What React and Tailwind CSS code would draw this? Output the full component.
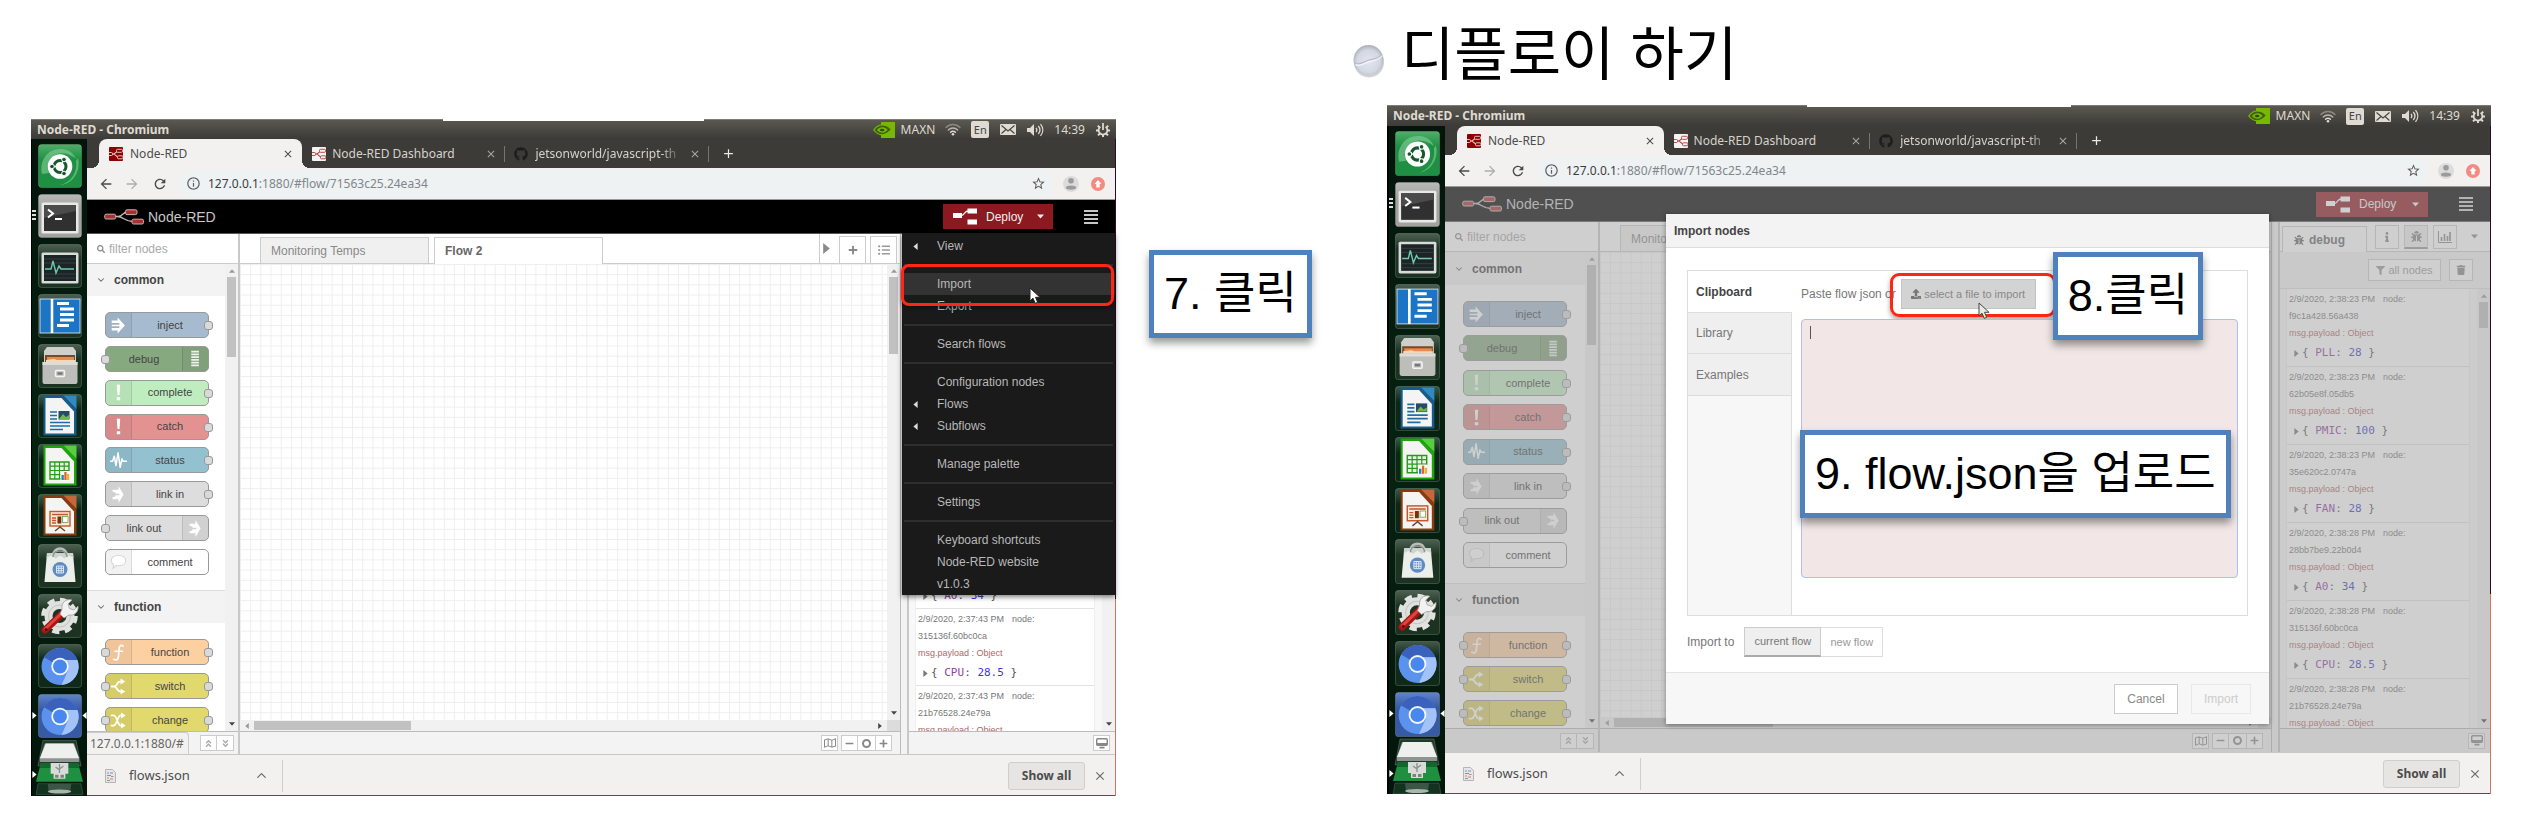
import React from "react";
import { FaBug, FaInfo, FaTrash, FaFilter, FaListUl, FaSearch, FaUpload, FaPlus, FaMinus, FaGithub, FaRegMap, FaAngleDoubleUp, FaAngleDoubleDown, FaChartBar } from "react-icons/fa";
import { MdArrowBack, MdArrowForward, MdRefresh, MdInfoOutline, MdStarBorder, MdClose, MdAdd } from "react-icons/md";
import { ChevronDown, ChevronUp } from "lucide-react";

const UI = "font-['Noto_Sans',sans-serif]";
const SANS = "font-['Liberation_Sans','Noto_Sans_CJK_KR',sans-serif]";
const MONO = "font-['DejaVu_Sans_Mono',monospace]";

/* ---------- small drawings ---------- */

function Tri({ dir = "down", className = "" }) {
  const d = { down: "M0 2h10L5 8z", up: "M0 8h10L5 2z", left: "M8 0v10L2 5z", right: "M2 0v10l6-5z" }[dir];
  return (
    <svg viewBox="0 0 10 10" className={"shrink-0 " + className} fill="currentColor" aria-hidden="true">
      <path d={d} />
    </svg>
  );
}

function NodeRedFavicon({ light }) {
  const bg = light ? "#f3f3f3" : "#8f0000";
  const fg = light ? "#b03a3a" : "#f0d0d0";
  return (
    <svg viewBox="0 0 14 14" className="size-[14px] shrink-0" aria-hidden="true">
      <rect width="14" height="14" rx="1" fill={bg} />
      <path d="M0 7h4c2.500 0 3-3 6-3M4 7c3 0 3 3.500 7 3.500" fill="none" stroke={fg} strokeWidth="1.100" />
      <rect x="7.500" y="2.300" width="6" height="3" rx="1" fill={bg} stroke={fg} strokeWidth=".9" />
      <rect x="8.500" y="8.800" width="5.500" height="3" rx="1" fill={bg} stroke={fg} strokeWidth=".9" />
      <rect x="-2" y="5.500" width="5.500" height="3" rx="1" fill={bg} stroke={fg} strokeWidth=".9" />
    </svg>
  );
}

function NodeRedLogo() {
  return (
    <svg viewBox="0 0 40 16" className="h-4 w-10 shrink-0" aria-hidden="true">
      <path d="M11 7.500h3c5 0 5-4.500 9-4.500M13 7.500c7 0 7 5 16 5" fill="none" stroke="#b9b9b9" strokeWidth="1.400" />
      <g fill="#a8322f" stroke="#c2b3b3" strokeWidth="1">
        <rect x=".7" y="5.200" width="11" height="4.800" rx="1.500" />
        <rect x="21.500" y=".8" width="11.500" height="4.800" rx="1.500" />
        <rect x="28" y="10.200" width="11.500" height="4.800" rx="1.500" />
      </g>
    </svg>
  );
}

function DeployIcon() {
  return (
    <svg viewBox="0 0 24 17" className="h-[17px] w-6 shrink-0" aria-hidden="true">
      <path d="M8 7.500c4 0 3-4.500 7-4.500" fill="none" stroke="#fff" strokeWidth="1.300" />
      <path fill="#fff" d="M0 5h9v5H0zM14.500.5H24v5h-9.500zM14.500 11.500H24v5h-9.500z" />
    </svg>
  );
}

function NvidiaIcon() {
  return (
    <svg viewBox="0 0 22 16" className="h-4 w-[22px] shrink-0" aria-hidden="true">
      <path fill="#76b900" d="M8 0h14v16H8z" />
      <path d="M.8 8C3 4.500 6 3 9.500 3c4 0 7 2.300 9 4.500-2.500 3-5.500 5.300-9 5.300C5.500 12.800 3 11 .8 8z" fill="#3f5f12" stroke="#76b900" strokeWidth="1.200" />
      <path d="M4 8c1.500-2 3.200-2.800 5.200-2.800 2.500 0 4.300 1.300 5.500 2.600-1.500 1.700-3 2.900-5 2.900C7.500 10.700 5.500 9.700 4 8z" fill="#76b900" />
      <path d="M6.500 7.900c.9-1 1.800-1.300 2.900-1.200 1.200.1 1.900.8 2.400 1.300-.7.800-1.400 1.300-2.400 1.300-1.200 0-2.200-.6-2.900-1.400z" fill="#2f4a0c" />
    </svg>
  );
}

function WifiIcon() {
  return (
    <svg viewBox="0 0 16 13" className="h-[13px] w-4 shrink-0" fill="none" strokeLinecap="round" aria-hidden="true">
      <path d="M1 4.500c4-4 10-4 14 0" stroke="#8b8a84" strokeWidth="1.400" />
      <path d="M3.300 7c2.700-2.700 6.700-2.700 9.400 0" stroke="#b9b7b0" strokeWidth="1.400" />
      <path d="M5.600 9.300c1.400-1.400 3.400-1.400 4.800 0" stroke="#dfdbd2" strokeWidth="1.400" />
      <circle cx="8" cy="11.300" r="1.300" fill="#dfdbd2" />
    </svg>
  );
}

function MailIcon() {
  return (
    <svg viewBox="0 0 16 11" className="h-[11px] w-4 shrink-0" aria-hidden="true">
      <rect width="16" height="11" rx="1" fill="#dfdbd2" />
      <path d="M1.500 1.500L8 7l6.500-5.500M1.500 9.500L6 5.500M14.500 9.500L10 5.500" fill="none" stroke="#45443f" strokeWidth="1.100" />
    </svg>
  );
}

function SoundIcon() {
  return (
    <svg viewBox="0 0 18 14" className="h-[14px] w-[18px] shrink-0" aria-hidden="true">
      <path fill="#dfdbd2" d="M1 5h3l4-4v12L4 9H1z" />
      <path d="M10 4.800c1 1.300 1 3.100 0 4.400M12.300 3c2 2.400 2 5.600 0 8M14.500 1.200c3 3.500 3 8.100 0 11.600" fill="none" stroke="#dfdbd2" strokeWidth="1.300" />
    </svg>
  );
}

function PowerGear() {
  return (
    <svg viewBox="0 0 16 16" className="size-[14px] shrink-0" aria-hidden="true">
      <path d="M8 13v3M13 8.500h3M0 8.500h3M11.500 12l2.200 2.200M2.300 14.200L4.500 12M12 5l2-2M4 5L2 3" stroke="#dfdbd2" strokeWidth="2.200" />
      <path d="M5 4.300a5 5 0 1 0 6 0" fill="none" stroke="#dfdbd2" strokeWidth="2" />
      <path d="M8 0v8" stroke="#dfdbd2" strokeWidth="2" />
    </svg>
  );
}

function ChartIcon() {
  return (
    <svg viewBox="0 0 14 12" className="h-3 w-[14px]" fill="none" stroke="#888" strokeWidth="1" aria-hidden="true">
      <path d="M.5 0v11.500H14" />
      <path d="M3.500 10V6M6.500 10V3M9.500 10V5M12 10V1" strokeWidth="1.600" />
    </svg>
  );
}

function Pointer({ dark, className = "" }) {
  return (
    <svg viewBox="0 0 12 18" className={"h-[18px] w-3 " + className} aria-hidden="true">
      <path d="M1 1v13l3-2.800 2.200 5.200 2.500-1.100-2.200-5H11z" fill={dark ? "#e8e8e8" : "#fff"} stroke={dark ? "#444" : "#222"} strokeWidth="1" />
    </svg>
  );
}

/* ---------- launcher ---------- */

const TileBase = ({ top = "#4d6152", bottom = "#1c3322", id }) => (
  <>
    <defs>
      <linearGradient id={id} x1="0" y1="0" x2="0" y2="1">
        <stop offset="0" stopColor={top} />
        <stop offset=".35" stopColor={bottom} />
        <stop offset="1" stopColor={bottom} />
      </linearGradient>
    </defs>
    <rect x=".5" y=".5" width="43" height="43" rx="3" fill={`url(#${id})`} stroke="#fff" strokeOpacity=".18" />
  </>
);

function DocTile({ id, dark, light, children }) {
  return (
    <>
      <TileBase id={id} top="#3b5a48" bottom="#0c2618" />
      <path d="M5.500 1.500h20L38.500 15v26.500h-33z" fill={dark} />
      <path d="M7.500 4h16L36 17.500V39.500H7.500z" fill="#f4f5f3" />
      <path d="M25.500 1.500h13V15z" fill={light} />
      {children}
    </>
  );
}

function Chromium({ id, top, bottom }) {
  return (
    <>
      <TileBase id={id} top={top} bottom={bottom} />
      <circle cx="22" cy="22.500" r="18.500" fill="#5b92ee" />
      <path d="M22 22.500L6 13.200A18.500 18.500 0 0 1 38 13.200c.7 1.300 1 2 1.300 2.800H22z" fill="#3a62bd" />
      <path d="M22 16h17.500a18.500 18.500 0 0 1-16 25l6.500-14.500z" fill="#a3c3f8" />
      <circle cx="22" cy="22.500" r="8.700" fill="#f3f6fc" />
      <circle cx="22" cy="22.500" r="6.900" fill="#4787ee" />
    </>
  );
}

const TILES = {
  ubuntu: (
    <>
      <TileBase id="t-ubuntu" top="#4fae68" bottom="#1d9043" />
      <path d="M4 30c-3-14 6-26 20-25 8 1 12 5 14 10-8-8-22-8-27 2-2 4-2 8 0 12M40 14c3 12-4 26-18 27 10-2 18-12 16-24" fill="#8fd3a0" opacity=".55" />
      <circle cx="22" cy="22.500" r="12.300" fill="#fff" />
      <circle cx="22" cy="22.500" r="6" fill="none" stroke="#16582c" strokeWidth="3" />
      <path d="M22 22.500h-9M22 22.500l4.500-8M22 22.500l4.500 8" stroke="#fff" strokeWidth="1.400" />
      <g fill="#16582c" stroke="#fff" strokeWidth="1">
        <circle cx="14" cy="22.500" r="2.300" />
        <circle cx="26" cy="15.500" r="2.300" />
        <circle cx="26" cy="29.500" r="2.300" />
      </g>
    </>
  ),
  terminal: (
    <>
      <TileBase id="t-term" top="#b9bab8" bottom="#a2a3a1" />
      <rect x="3.500" y="8.500" width="37" height="31" rx="1.500" fill="#e8e8e6" />
      <rect x="6" y="11" width="32" height="26" fill="#2f302f" />
      <path d="M6 24l32-7v-6H6z" fill="#4a4b4a" />
      <path d="M10 15.500l5 4-5 4" fill="none" stroke="#fff" strokeWidth="2" />
      <path d="M17 25h7" stroke="#fff" strokeWidth="2" />
    </>
  ),
  monitor: (
    <>
      <TileBase id="t-mon" />
      <rect x="3.500" y="8.500" width="37" height="31" rx="1.500" fill="#d8dbd9" />
      <rect x="6" y="11" width="32" height="26" fill="#1c2526" />
      <path d="M6 15h32M6 19h32M6 30h32M6 34h32" stroke="#3a4546" strokeWidth=".8" />
      <path d="M7 25h6l2-8 3 12 3-7 2 3h13" fill="none" stroke="#6fc7b0" strokeWidth="1.400" />
    </>
  ),
  reader: (
    <>
      <TileBase id="t-read" />
      <rect x="2" y="5" width="40" height="34" fill="#1b74c4" stroke="#bcd6ee" strokeWidth="1" />
      <path d="M14 5v34" stroke="#fff" strokeWidth="2.600" />
      <path d="M19 9.500h12M22 15h14M22 20.500h14M22 26h14M19 31.500h12" stroke="#fff" strokeWidth="2.800" />
    </>
  ),
  files: (
    <>
      <TileBase id="t-files" />
      <path d="M6 7l3-4h26l3 4v12H6z" fill="#cfcfcb" />
      <path d="M7 11h30v8H7z" fill="#7a4a24" />
      <path d="M9 13h27v6H9z" fill="#e98b4b" />
      <path d="M8 16l8-1 3 1h18v4H8z" fill="#f4d9b8" />
      <path d="M4.500 18h35v20a2 2 0 0 1-2 2h-31a2 2 0 0 1-2-2z" fill="#bdbdba" />
      <path d="M4.500 18h35v3h-35z" fill="#dcdcd9" />
      <rect x="17.500" y="26.500" width="9" height="6" rx="1" fill="none" stroke="#f5f5f3" strokeWidth="1.500" />
      <rect x="19.500" y="28.300" width="5" height="2.400" fill="#777" />
    </>
  ),
  writer: (
    <DocTile id="t-wr" dark="#185b8b" light="#2f8ac2">
      <path d="M12 18h7M12 21.500h7M12 25h7M12 28.500h20M12 32h20M12 35.500h13" stroke="#1e6ea5" strokeWidth="1.700" />
      <rect x="20.500" y="17" width="11" height="8.500" fill="#274a66" />
      <path d="M21 25l4-5 3 3 3-2v4z" fill="#72b74b" />
    </DocTile>
  ),
  calc: (
    <DocTile id="t-ca" dark="#1fa50c" light="#55cf3e">
      <path d="M12 18h19v17H12z" fill="#e9f7e6" stroke="#2a9a1b" strokeWidth="1.400" />
      <path d="M12 22.200h19M12 26.500h19M12 30.700h19M16.800 18v17M21.500 18v17M26.200 18v17" stroke="#2a9a1b" strokeWidth="1.200" />
      <rect x="22.500" y="27" width="9.500" height="9.500" fill="#fff" />
      <path d="M23.500 31h2.300v5h-2.300z" fill="#2c79c4" />
      <path d="M26.300 28h2.300v8h-2.300z" fill="#e2622a" />
      <path d="M29 30h2.300v6H29z" fill="#edb52d" />
    </DocTile>
  ),
  impress: (
    <DocTile id="t-im" dark="#8a3a0d" light="#c6663a">
      <rect x="12" y="17.500" width="20" height="14.500" fill="#fbe9df" stroke="#c8562a" strokeWidth="1.400" />
      <path d="M14 20.500h16M14 24h4M14 26.500h4M14 29h4" stroke="#c8562a" strokeWidth="1.300" />
      <rect x="19.500" y="22.500" width="3.800" height="7" fill="#7b2d0c" />
      <rect x="24.500" y="22.500" width="5.500" height="6" fill="#fff" stroke="#5aa84d" strokeWidth=".8" />
      <path d="M22 32v2M22 33l-5 4M22 33l5 4" stroke="#6b4634" strokeWidth="1.500" />
    </DocTile>
  ),
  store: (
    <>
      <TileBase id="t-st" />
      <path d="M15 11c0-9 14-9 14 0M18 8c1-5 10-4 10 3" fill="none" stroke="#b9beb9" strokeWidth="1.800" />
      <path d="M9 9h26l2.500 29h-31z" fill="#eceeea" />
      <path d="M9 9h26l.5 5-5-2.500-4 3-4.500-3-4.500 3-4-3L8.600 14z" fill="#cfd3ce" />
      <path d="M15 13c0-8 14-8 14 0" fill="none" stroke="#8f958f" strokeWidth="1.600" />
      <circle cx="22" cy="25.500" r="7.500" fill="#5f8bc4" />
      <path d="M18.500 22h7v7h-7zM18.500 24.300h7M18.500 26.700h7M20.800 22v7M23.200 22v7" fill="none" stroke="#e4edf8" strokeWidth=".9" />
    </>
  ),
  settings: (
    <>
      <TileBase id="t-se" />
      <circle cx="21.500" cy="22" r="15.800" fill="none" stroke="#e1e3e1" strokeWidth="5" strokeDasharray="7 5.410" />
      <circle cx="21.500" cy="22" r="11" fill="none" stroke="#dfe1df" strokeWidth="8" />
      <circle cx="21.500" cy="22" r="11" fill="none" stroke="#c2c5c2" strokeWidth="1" />
      <path d="M7 36L25 19" stroke="#a81512" strokeWidth="7" strokeLinecap="round" />
      <path d="M7 35L25 18" stroke="#dd4540" strokeWidth="3" strokeLinecap="round" />
      <path d="M24 15c-1-6 4-11 10-9l-4 4 1.500 4.500L36 16l4-4c1 6-4 10-9 9l-5 3-4-4z" fill="#f1f2f1" stroke="#9da09d" strokeWidth=".8" />
      <circle cx="8" cy="35.500" r="1.500" fill="#5d0a08" />
    </>
  ),
  chromium: <Chromium id="t-c1" top="#44584a" bottom="#0f2a19" />,
  chromiumActive: <Chromium id="t-c2" top="#5f84ca" bottom="#375aa4" />,
};

function StackTile() {
  return (
    <svg viewBox="0 0 50 56" className="h-[56px] w-full" aria-hidden="true">
      <path d="M8 1h34l5 26H3z" fill="#1f3b2a" stroke="#fff" strokeOpacity=".2" />
      <path d="M10 4h30l5 15v4H5v-4z" fill="#8f9391" />
      <path d="M11 4h28l6 15H5z" fill="#eef0ee" />
      <path d="M6 24h38l5 19H1z" fill="#1f8f42" />
      <path d="M6 24h38l1 5H5z" fill="#12672c" />
      <path d="M16 24h18v11h-3v5H19v-5h-3z" fill="#d8dbd8" />
      <path d="M25 25v9M25 31l-4-3M25 30l4-3" stroke="#8a8f8b" strokeWidth="1.300" fill="none" />
      <path d="M20.500 36h3.500v3h-3.500zM26 36h3.500v3H26z" fill="#7d827e" />
      <path d="M3 45h44l2 11H1z" fill="#143220" stroke="#fff" strokeOpacity=".15" />
      <path d="M13 45h24l-1 8c-3 2-19 2-22 0z" fill="#3b5646" />
      <ellipse cx="25" cy="53" rx="12" ry="2" fill="#a9b5ad" />
    </svg>
  );
}

function Launcher({ wide }) {
  const names = Object.keys(TILES);
  return (
    <nav
      aria-label="Launcher"
      className={"flex shrink-0 flex-col items-center gap-[6px] overflow-hidden bg-gradient-to-b from-[#04140b] via-[#052311] to-[#04150b] pt-[5px] " + (wide ? "w-[56px]" : "w-[55px]")}
    >
      {names.map((n) => (
        <button key={n} aria-label={n} className="relative flex w-full shrink-0 justify-center">
          <svg viewBox="0 0 44 44" className={wide ? "size-[45px]" : "size-11"}>{TILES[n]}</svg>
          {n === "terminal" && (
            <span className="absolute top-4 left-0 flex flex-col gap-[2px]">
              <i className="h-[2px] w-1 bg-[#ddd]" /><i className="h-[2px] w-1 bg-[#ddd]" /><i className="h-[2px] w-1 bg-[#ddd]" />
            </span>
          )}
          {n === "chromiumActive" && (
            <>
              <Tri dir="right" className="absolute top-[18px] -left-px size-[7px] text-white" />
              <Tri dir="left" className="absolute top-[18px] -right-px size-[7px] text-white" />
            </>
          )}
        </button>
      ))}
      <button aria-label="drives and trash" className="relative -mt-[5px] flex w-full shrink-0 justify-center px-[3px]">
        <StackTile />
        <Tri dir="right" className="absolute top-[32px] -left-px size-[7px] text-white" />
      </button>
    </nav>
  );
}

/* ---------- desktop and browser bars ---------- */

function DesktopBar({ wide }) {
  return (
    <header
      className={
        UI + " relative flex items-center justify-between border-t border-[#7d7c75] bg-gradient-to-b from-[#5a5850] to-[#3c3b37] px-[6px] text-xs text-[#dfdbd2] " +
        (wide ? "h-[21px]" : "h-5")
      }
    >
      <i className="absolute -top-px left-[38%] h-[2px] w-[24%] bg-white" />
      <h2 className="leading-4 font-bold">Node-RED - Chromium</h2>
      <div className="flex items-center leading-4">
        <NvidiaIcon />
        <span className="ml-[6px]">MAXN</span>
        <span className="ml-[10px]"><WifiIcon /></span>
        <span className="ml-[10px] flex h-[17px] w-[18px] items-center justify-center rounded-[2px] bg-[#dfdbd2] text-[11px] text-[#45443f]">En</span>
        <span className="ml-[11px]"><MailIcon /></span>
        <span className="ml-[10px]"><SoundIcon /></span>
        <span className="ml-[10px]">14:39</span>
        <span className="ml-[11px]"><PowerGear /></span>
      </div>
    </header>
  );
}

function BrowserTabs() {
  return (
    <div className={UI + " flex h-[29px] bg-[#3c3b37] pl-3 text-xs text-[#d5d3cc]"} role="tablist">
      <div className="relative flex w-[20%] items-center rounded-t-lg bg-[#f2f1f0] pr-2 pl-[10px] text-[#4c4c4c]">
        <i className="absolute bottom-0 -left-2 size-2 bg-[radial-gradient(circle_at_0_0,#3c3b37_8px,#f2f1f0_8px)]" />
        <i className="absolute -right-2 bottom-0 size-2 bg-[radial-gradient(circle_at_100%_0,#3c3b37_8px,#f2f1f0_8px)]" />
        <NodeRedFavicon />
        <button role="tab" aria-selected="true" className="ml-[7px] flex-1 text-left">Node-RED</button>
        <button aria-label="Close tab"><MdClose className="size-3" /></button>
      </div>
      <div className="flex w-[20%] items-center pl-[10px]">
        <NodeRedFavicon light />
        <button role="tab" className="ml-[6px] flex-1 text-left whitespace-nowrap">Node-RED Dashboard</button>
        <button aria-label="Close tab" className="mr-[7px] text-[#aaa8a1]"><MdClose className="size-3" /></button>
        <i className="h-4 w-px bg-[#77756e]" />
      </div>
      <div className="flex w-[20%] items-center pl-[9px]">
        <FaGithub className="size-[14px] shrink-0 text-[#1d1d1b]" />
        <button role="tab" className="ml-[7px] min-w-0 flex-1 text-left whitespace-nowrap [mask-image:linear-gradient(to_right,#000_85%,transparent)]">jetsonworld/javascript-th</button>
        <button aria-label="Close tab" className="mr-[7px] ml-[6px] text-[#aaa8a1]"><MdClose className="size-3" /></button>
        <i className="h-4 w-px bg-[#77756e]" />
      </div>
      <button aria-label="New tab" className="ml-3 text-[#eceae4]"><MdAdd className="size-[15px]" /></button>
    </div>
  );
}

function AddressBar() {
  return (
    <div className={UI + " flex h-8 items-center border-b border-[#9a9a98] bg-[#f2f1f0] pr-[10px] pl-[11px] text-xs"}>
      <button aria-label="Back"><MdArrowBack className="size-4 text-[#4a4a4a]" /></button>
      <button aria-label="Forward" className="ml-[10px]"><MdArrowForward className="size-4 text-[#adadad]" /></button>
      <button aria-label="Reload" className="ml-3"><MdRefresh className="size-4 text-[#4a4a4a]" /></button>
      <div className="ml-3 flex h-7 flex-1 items-center rounded-full bg-[#eef2f3] pr-[7px] pl-[6px]">
        <MdInfoOutline className="size-[15px] text-[#5d6166]" />
        <p className="ml-[7px] flex-1 text-[#80868b]"><span className="text-[#3a3d40]">127.0.0.1</span>:1880/#flow/71563c25.24ea34</p>
        <button aria-label="Bookmark"><MdStarBorder className="size-[15px] text-[#5a5a5a]" /></button>
      </div>
      <button aria-label="Profile" className="ml-[10px]">
        <svg viewBox="0 0 16 16" className="size-4">
          <circle cx="8" cy="8" r="8" fill="#dcdcdc" />
          <circle cx="8" cy="4.800" r="2.800" fill="#9b9b9b" />
          <path d="M2.800 11.500c0-2.800 10.400-2.800 10.400 0 0 3-10.400 3-10.400 0z" fill="#9b9b9b" />
        </svg>
      </button>
      <button aria-label="Update" className="ml-3">
        <svg viewBox="0 0 14 14" className="size-[14px]">
          <circle cx="7" cy="7" r="7" fill="#f28b82" />
          <path d="M7 3l3.500 4H8.700v3.500H5.300V7H3.500z" fill="#fff" />
        </svg>
      </button>
    </div>
  );
}

function DownloadBar() {
  return (
    <footer className={UI + " flex h-[42px] items-center border-t border-b border-t-[#c9c8c6] border-b-[#5c4a58] bg-[#f2f1f0] pt-px pr-2 pl-[18px]"}>
      <svg viewBox="0 0 11 14" className="h-[14px] w-[11px]" aria-hidden="true">
        <path d="M.5.500h7l3 3v10H.5z" fill="#e6e6e6" stroke="#b5b5b5" />
        <path d="M2 4h2M5 4h3M2 6.500h4" stroke="#7d93b5" strokeWidth="1" />
        <path d="M2 9h2M6 7.500h2.500M5 10h3" stroke="#d08080" strokeWidth="1" />
        <path d="M2 11.500h3" stroke="#7da58a" strokeWidth="1" />
      </svg>
      <a href="#flows" className="ml-[13px] w-[125px] text-[13px] text-[#4c4c4c]">flows.json</a>
      <button aria-label="Download options"><ChevronUp className="size-[15px] text-[#6a6a6a]" strokeWidth={2} /></button>
      <i className="ml-[13px] h-8 w-px bg-[#cfcecc]" />
      <button className="ml-auto h-7 w-[77px] rounded-[3px] border border-[#cfcecc] bg-[#e6e5e3] text-xs font-bold text-[#4c4c4c]">Show all</button>
      <button aria-label="Close downloads" className="ml-2"><MdClose className="size-[14px] text-[#6a6a6a]" /></button>
    </footer>
  );
}

/* ---------- Node-RED editor ---------- */

const GLYPHS = {
  inject: <path d="M2 4h7V.5L17.500 10 9 19.500V16H2v-3h9v-2H2V9h9V7H2z" fill="#fff" />,
  debug: <path d="M5 1h9v2H5zM5 4.200h9v2H5zM5 7.400h9v2H5zM5 10.600h9v2H5zM5 13.800h9v2H5zM5 17h9v2H5z" fill="#fff" fillOpacity=".85" />,
  alert: <path d="M8 1h4l-.8 12H8.800zM8 15.500h4V19H8z" fill="#fff" />,
  status: <path d="M0 11h3l2-6 2 11 2.500-15 2.500 17 2-10 1.500 3H20" fill="none" stroke="#fff" strokeWidth="1.800" strokeLinejoin="round" />,
  link: <path d="M3 4.500h7V0l6 10-6 10v-4.500H3v-2.200c2.200 0 3.300-1 3.800-2.300H11v-2H6.800C6.300 7.700 5.200 6.700 3 6.700z" fill="#fff" />,
  comment: <path d="M10 3c5 0 8.500 2.500 8.500 6s-3.500 6-8.500 6c-1 0-2 0-2.700-.3L3.500 18l.8-4.500C2.500 12.400 1.500 11 1.500 9c0-3.500 3.500-6 8.500-6z" fill="#fff" stroke="#d6d6d6" strokeWidth="1.300" />,
  fn: <path d="M15.500 2.500c-3-2-4.800 0-5 4L10 14c-.3 4-2 6-5.500 4M6 8.500h8.500" fill="none" stroke="#fff" strokeWidth="2" strokeLinecap="round" />,
  switch: (
    <g fill="none" stroke="#fff" strokeWidth="2.200">
      <path d="M1 10h4c4 0 2-6 8-6M5 10c4 0 2 6 8 6" />
      <path d="M12.500.5L18 4l-5.500 3.500zM12.500 12.500L18 16l-5.500 3.500z" fill="#fff" stroke="none" />
    </g>
  ),
  change: (
    <g fill="none" stroke="#fff" strokeWidth="2.200">
      <path d="M1 4h3c5 0 4 12 9 12M1 16h3c5 0 4-12 9-12" />
      <path d="M13 .5L18.500 4 13 7.500zM13 12.500l5.500 3.500-5.500 3.500z" fill="#fff" stroke="none" />
    </g>
  ),
};

const COMMON = [
  { label: "inject", glyph: "inject", bg: "bg-[#a6bbcf]", out: true },
  { label: "debug", glyph: "debug", bg: "bg-[#87a980]", flip: true, inp: true },
  { label: "complete", glyph: "alert", bg: "bg-[#c0edc0]", out: true },
  { label: "catch", glyph: "alert", bg: "bg-[#e49191]", out: true },
  { label: "status", glyph: "status", bg: "bg-[#94c1d0]", out: true },
  { label: "link in", glyph: "link", bg: "bg-[#dddddd]", out: true },
  { label: "link out", glyph: "link", bg: "bg-[#dddddd]", flip: true, inp: true },
  { label: "comment", glyph: "comment", bg: "bg-white" },
];
const FUNCTIONS = [
  { label: "function", glyph: "fn", bg: "bg-[#fdd0a2]", inp: true, out: true },
  { label: "switch", glyph: "switch", bg: "bg-[#e2d96e]", inp: true, out: true },
  { label: "change", glyph: "change", bg: "bg-[#e2d96e]", inp: true, out: true },
];

function PaletteNode({ label, glyph, bg, flip, inp, out }) {
  const port = "absolute top-2 size-[9px] rounded-[3px] border border-[#999] bg-[#d9d9d9]";
  return (
    <div className={"relative flex h-[26px] w-[104px] shrink-0 items-stretch rounded-[5px] border border-[#999] text-[11px] text-[#444] " + bg + (flip ? " flex-row-reverse" : "")}>
      <span className={"flex w-[26px] items-center justify-center bg-black/5 " + (flip ? "rounded-r border-l border-black/10" : "rounded-l border-r border-black/10")}>
        <svg viewBox="0 0 20 20" className="size-[17px]" aria-hidden="true">{GLYPHS[glyph]}</svg>
      </span>
      <span className="flex flex-1 items-center justify-center">{label}</span>
      {inp && <i className={port + " -left-[5px]"} />}
      {out && <i className={port + " -right-[5px]"} />}
    </div>
  );
}

function CategoryHead({ children, className }) {
  return (
    <button className={"flex w-full shrink-0 items-center bg-[#f3f3f3] pl-[9px] text-left text-xs font-bold text-[#444] " + className}>
      <ChevronDown className="size-[10px] text-[#666]" strokeWidth={2.5} />
      <span className="ml-[8px]">{children}</span>
    </button>
  );
}

function SmallButton({ label, children, className = "" }) {
  return (
    <button aria-label={label} className={"flex h-4 w-[17px] items-center justify-center border border-[#ccc] bg-white text-[#888] " + className}>
      {children}
    </button>
  );
}

function Palette({ wide }) {
  return (
    <aside className={"flex shrink-0 flex-col border-r-2 border-[#c8c8c8] bg-white " + (wide ? "w-[155px]" : "w-[153px]")}>
      <label className="flex h-[30px] shrink-0 items-center border-b border-[#ccc] pl-[10px]">
        <FaSearch className="size-2 shrink-0 text-[#888]" />
        <input type="text" aria-label="filter nodes" placeholder="filter nodes" className="ml-1 w-full min-w-0 bg-transparent text-xs outline-none placeholder:text-[#aaa]" />
      </label>
      <div className="flex min-h-0 flex-1">
        <div className="flex min-w-0 flex-1 flex-col overflow-hidden">
          <CategoryHead className={wide ? "h-[33px]" : "h-8"}>common</CategoryHead>
          <div className={"mt-4 mb-[15px] flex shrink-0 flex-col justify-between pl-[18px] " + (wide ? "h-[267px]" : "h-[263px]")}>
            {COMMON.map((n) => <PaletteNode key={n.label} {...n} />)}
          </div>
          <CategoryHead className="h-[33px] border-t border-[#ddd]">function</CategoryHead>
          <div className="mt-4 flex flex-col gap-2 pl-[18px]">
            {FUNCTIONS.map((n) => <PaletteNode key={n.label} {...n} />)}
          </div>
        </div>
        <div className="flex w-[13px] shrink-0 flex-col items-center bg-[#f1f1f1] py-1">
          <Tri dir="up" className="size-[6px] text-[#999]" />
          <i className="mt-[3px] h-20 w-[9px] bg-[#c1c1c1]" />
          <Tri dir="down" className="mt-auto size-[6px] text-[#444]" />
        </div>
      </div>
      <div className={"flex shrink-0 items-center justify-end border-t border-[#bbb] bg-[#f3f3f3] pr-1 " + (wide ? "h-6" : "h-[23px]")}>
        {!wide && (
          <span className={UI + " mr-auto flex h-full items-center rounded-tr border-t border-r border-[#ccc] bg-[#f2f1f0] pr-1 pl-[3px] text-xs text-[#666]"}>127.0.0.1:1880/#</span>
        )}
        <SmallButton label="Collapse all"><FaAngleDoubleUp className="size-[9px] text-[#aaa]" /></SmallButton>
        <SmallButton label="Expand all" className="border-l-0"><FaAngleDoubleDown className="size-[9px] text-[#aaa]" /></SmallButton>
      </div>
    </aside>
  );
}

function Workspace({ wide }) {
  return (
    <main className="flex min-w-0 flex-1 flex-col border-r border-[#bbb] bg-white">
      <div className="flex h-[30px] shrink-0 items-end border-b border-[#ccc] pl-[20px] text-xs">
        <button className="h-[26px] w-[169px] border border-b-0 border-[#ccc] bg-[#f0f0f0] pl-[10px] text-left text-[#888]">Monitoring Temps</button>
        <button className="-mb-px ml-[5px] h-[27px] w-[169px] border border-b-0 border-[#ccc] bg-white pl-[10px] text-left font-bold text-[#666]">Flow 2</button>
        <button aria-label="Scroll tabs" className="mr-[2px] ml-auto flex h-full w-[18px] items-center border-l border-[#ccc] pl-px"><Tri dir="right" className="size-[11px] text-[#8a8a8a]" /></button>
        <button aria-label="Add flow" className="flex h-[27px] w-[27px] items-center justify-center border border-b-0 border-[#ccc] text-[#888]"><FaPlus className="size-[10px]" /></button>
        <button aria-label="List flows" className="mr-[3px] ml-1 flex h-[27px] w-[27px] items-center justify-center border border-b-0 border-[#ccc] text-[#999]"><FaListUl className="size-3" /></button>
      </div>
      <div className="flex min-h-0 flex-1">
        <div className="flex min-w-0 flex-1 flex-col">
          <div className="flex-1 bg-[linear-gradient(to_right,#eeeeee_1px,transparent_1px),linear-gradient(to_bottom,#eeeeee_1px,transparent_1px)] bg-size-[10.2px_10.2px]" />
          <div className="flex h-[11px] shrink-0 items-center bg-[#f1f1f1] px-1">
            <Tri dir="left" className="size-[6px] text-[#999]" />
            <i className="ml-[4px] h-[9px] w-[24.5%] bg-[#c1c1c1]" />
            <Tri dir="right" className="ml-auto size-[6px] text-[#444]" />
          </div>
        </div>
        <div className="flex w-[13px] shrink-0 flex-col items-center bg-[#f1f1f1] pt-1">
          <Tri dir="up" className="size-[6px] text-[#999]" />
          <i className="mt-[3px] h-[77px] w-[9px] bg-[#c1c1c1]" />
          <Tri dir="down" className="mt-auto size-[6px] text-[#444]" />
          <i className="mt-1 h-[11px] w-full bg-[#dcdcdc]" />
        </div>
      </div>
      <div className={"flex shrink-0 items-center justify-end border-t border-[#bbb] bg-[#f3f3f3] pr-2 " + (wide ? "h-6" : "h-[23px]")}>
        <SmallButton label="Toggle navigator" className="mr-[3px]"><FaRegMap className="size-3" /></SmallButton>
        <SmallButton label="Zoom out"><FaMinus className="size-[9px]" /></SmallButton>
        <SmallButton label="Reset zoom" className="border-x-0"><i className="size-[9px] rounded-full border-2 border-[#888]" /></SmallButton>
        <SmallButton label="Zoom in"><FaPlus className="size-[9px]" /></SmallButton>
      </div>
    </main>
  );
}

function Message({ time, node, name, value, wide, covered }) {
  return (
    <li className={"border-b border-[#e3e3e3] px-[2px] text-[9px] leading-[17px] text-[#777] " + (wide ? "h-[78px] pt-[2px]" : "h-[77px] pt-[2px]") + (covered ? " invisible" : "")}>
      <p>2/9/2020, {time} PM<span className="ml-2">node:</span></p>
      <p>{node}</p>
      <p className="text-[#b06767]">msg.payload : Object</p>
      <p className={MONO + " flex items-center pl-1 text-[11px] leading-[22px] whitespace-pre text-[#555]"}>
        <Tri dir="right" className="mr-[2px] size-[7px] text-[#777]" />
        <span>{"{ "}<span className="text-[#8f3f9f]">{name}</span>{": "}<span className="text-[#3a3ad0]">{value}</span>{" }"}</span>
      </p>
    </li>
  );
}

function Sidebar({ wide, messages }) {
  const tabBtn = "flex size-6 items-center justify-center border border-[#ccc] text-[#888]";
  const covered = wide ? "" : " invisible";
  return (
    <aside className={"ml-[6px] flex shrink-0 flex-col border-l-2 border-[#c8c8c8] bg-white " + (wide ? "w-[212px]" : "w-[208px]")}>
      <div className={"flex h-[30px] shrink-0 items-center border-b border-[#ccc] pl-[2px]" + covered}>
        <button className="-mb-[5px] flex h-[27px] w-[85px] items-center border border-b-0 border-[#ccc] bg-white pl-[11px] text-xs font-bold text-[#666]">
          <FaBug className="mr-[5px] size-[10px]" />debug
        </button>
        <button aria-label="Info" className={tabBtn + " ml-2"}><FaInfo className="size-[10px]" /></button>
        <button aria-label="Debug" className={tabBtn + " ml-[5px] border-b-2 border-b-[#999] bg-[#eee]"}><FaBug className="size-[11px]" /></button>
        <button aria-label="Chart" className={tabBtn + " ml-[5px]"}><ChartIcon /></button>
        <button aria-label="More" className="ml-[14px] text-[#888]"><Tri className="size-[7px]" /></button>
      </div>
      <div className={"flex h-[37px] shrink-0 items-center justify-end gap-2 border-b border-[#ddd] bg-[#f3f3f3] pr-[17px] text-[11px]" + covered}>
        <button className="flex h-[22px] w-[73px] items-center justify-center gap-[3px] border border-[#ccc] bg-white text-[#999]"><FaFilter className="size-[9px]" />all nodes</button>
        <button aria-label="Clear" className="flex h-[22px] w-6 items-center justify-center border border-[#ccc] bg-white text-[#888]"><FaTrash className="size-[10px]" /></button>
      </div>
      <div className="flex min-h-0 flex-1 bg-[#f8f8f8]">
        <ul className={"mr-[7px] ml-[6px] min-w-0 flex-1 overflow-hidden border-x border-[#eee] bg-white"}>
          {messages.map((m, i) => <Message key={m.node} {...m} wide={wide} covered={!wide && i < 3} />)}
        </ul>
        <div className="flex w-[13px] shrink-0 flex-col items-center bg-[#f1f1f1] py-1">
          <Tri dir="up" className="size-[6px] text-[#999]" />
          <i className="mt-[3px] h-[26px] w-[9px] bg-[#c1c1c1]" />
          <Tri dir="down" className="mt-auto size-[6px] text-[#444]" />
        </div>
      </div>
      <div className={"flex shrink-0 items-center justify-end border-t border-[#bbb] bg-[#f3f3f3] pr-[5px] " + (wide ? "h-6" : "h-[23px]")}>
        <SmallButton label="Open in new window">
          <svg viewBox="0 0 12 11" className="h-[11px] w-3" fill="none" stroke="#888" strokeWidth="1.400">
            <rect x=".7" y=".7" width="10.600" height="6.600" rx="1" />
            <path d="M1 6h10M3.500 9.700h5" strokeWidth="1.800" />
          </svg>
        </SmallButton>
      </div>
    </aside>
  );
}

function EditorHeader({ wide }) {
  return (
    <div className={"flex shrink-0 items-center border-b border-[#555] bg-black pr-[17px] pl-[17px] " + (wide ? "h-[35px]" : "h-[34px]")}>
      <NodeRedLogo />
      <h3 className="ml-[4px] text-sm leading-5 text-[#c7c7c7]">Node-RED</h3>
      <div className={"ml-auto flex h-[25px] bg-[#8c1920] text-xs text-[#eee] " + (wide ? "w-[112px]" : "w-[110px]")}>
        <button className="flex flex-1 items-center pl-[10px]"><DeployIcon /><span className="ml-[9px]">Deploy</span></button>
        <button aria-label="Deploy options" className="flex w-4 items-center"><Tri className="size-[7px]" /></button>
      </div>
      <button aria-label="Menu" className="ml-[31px] flex w-[14px] flex-col gap-[2px]">
        <i className="h-[2px] bg-[#c7c7c7]" /><i className="h-[2px] bg-[#c7c7c7]" /><i className="h-[2px] bg-[#c7c7c7]" /><i className="h-[2px] bg-[#c7c7c7]" />
      </button>
    </div>
  );
}

const MENU = [
  [["View", true]],
  [["Import"], ["Export"]],
  [["Search flows"]],
  [["Configuration nodes"], ["Flows", true], ["Subflows", true]],
  [["Manage palette"]],
  [["Settings"]],
  [["Keyboard shortcuts"], ["Node-RED website"], ["v1.0.3"]],
];

function MainMenu() {
  return (
    <div role="menu" className="absolute top-[33px] right-0 w-[213px] bg-[#1a1a1a] pt-[2px] text-xs text-[#b8b8b8] shadow-[0_2px_5px_rgba(0,0,0,0.5)]">
      {MENU.map((group, gi) => (
        <div key={gi}>
          {gi > 0 && <hr className="mx-[2px] my-[7px] border-t-2 border-[#2e2e2e]" />}
          {group.map(([label, sub]) => (
            <button key={label} role="menuitem" className={"flex h-[22px] w-full items-center pl-[10px] text-left " + (label === "Import" ? "bg-[#333]" : "")}>
              <span className="w-[25px]">{sub && <Tri dir="left" className="size-[7px] text-[#ddd]" />}</span>
              {label}
            </button>
          ))}
        </div>
      ))}
      <i className="absolute top-[31px] -left-px h-[42px] w-[213px] rounded-lg border-[3px] border-[#ff2616] shadow-[0_2px_4px_rgba(0,0,0,0.4)]" />
      <Pointer className="absolute top-[54px] left-[127px]" />
    </div>
  );
}

function ImportDialog() {
  return (
    <section role="dialog" aria-label="Import nodes" className="relative flex h-[510px] w-[57.7%] flex-col self-start bg-white text-xs text-[#777] shadow-[0_1px_5px_rgba(0,0,0,0.4)]">
      <h4 className="flex h-[34px] shrink-0 items-center border-b border-[#ddd] bg-[#f3f3f3] pl-2 font-bold text-[#444]">Import nodes</h4>
      <div className="mx-[21px] mt-[22px] flex h-[346px] border border-[#ddd]">
        <div className="flex w-[104px] shrink-0 flex-col border-r border-[#ddd] bg-[#f7f7f7]">
          <button className="-mr-px h-[41px] bg-white pl-2 text-left font-bold text-[#444]">Clipboard</button>
          <button className="h-[42px] border-y border-[#ddd] bg-[#efefef] pl-2 text-left">Library</button>
          <button className="h-[42px] border-b border-[#ddd] bg-[#efefef] pl-2 text-left">Examples</button>
        </div>
        <div className="flex min-w-0 flex-1 flex-col pt-[8px] pr-[9px] pl-[9px]">
          <div className="relative flex h-[30px] items-center">
            <label htmlFor="flow-json">Paste flow json or</label>
            <button className="ml-[5px] flex h-[30px] w-[135px] items-center justify-center gap-[3px] border border-[#c4c4c4] bg-[#d3d3d3] text-[11px] text-[#888]">
              <FaUpload className="size-[10px] text-[#777]" />select a file to import
            </button>
            <i className="absolute -top-[6px] left-[89px] h-[44px] w-[166px] rounded-[9px] border-[3px] border-[#ff2616] shadow-[0_3px_5px_rgba(0,0,0,0.35)]" />
            <Pointer dark className="absolute top-[23px] left-[177px]" />
          </div>
          <div className="relative mt-[10px]">
            <textarea id="flow-json" className="block h-[259px] w-full resize-none rounded border border-[#a9c1ec] bg-[#f2e6e6] outline-none" />
            <i className="absolute top-[7px] left-[9px] h-[13px] w-px bg-[#555]" />
          </div>
        </div>
      </div>
      <div className="mt-[11px] flex items-center pl-[21px]">
        <span>Import to</span>
        <button aria-pressed="true" className="ml-[10px] h-[30px] w-[77px] border border-b-2 border-[#ccc] border-b-[#aaa] bg-[#efefef] text-[11px] text-[#777]">current flow</button>
        <button aria-pressed="false" className="h-[30px] w-[62px] border border-l-0 border-[#ddd] bg-white text-[11px] text-[#999]">new flow</button>
      </div>
      <div className="mt-auto flex h-[52px] items-center justify-end gap-[13px] border-t border-[#e3e3e3] bg-[#f7f7f7] pr-[18px]">
        <button className="h-[30px] w-16 border border-[#ccc] bg-white text-[#888]">Cancel</button>
        <button disabled className="h-[30px] w-[60px] border border-[#e8e8e8] text-[#ccc]">Import</button>
      </div>
    </section>
  );
}

function Callout({ children, className = "" }) {
  return (
    <p className={"w-max border-[5px] border-[#4f81bd] bg-white px-[10px] py-[7px] text-[45px] leading-[64px] whitespace-nowrap text-black shadow-[0_5px_8px_rgba(0,0,0,0.4)] " + className}>
      {children}
    </p>
  );
}

function Screen({ wide, messages, children }) {
  return (
    <div className="flex flex-col bg-[#2c0a1e]">
      <DesktopBar wide={wide} />
      <div className="flex">
        <i className={"shrink-0 bg-black " + (wide ? "w-[2px]" : "w-px")} />
        <Launcher wide={wide} />
        <div className="flex h-auto min-w-0 flex-1 flex-col">
          <BrowserTabs />
          <AddressBar />
          <div className={SANS + " relative flex flex-col"}>
            <EditorHeader wide={wide} />
            <div className={"flex bg-[#f3f3f3] " + (wide ? "h-[530px]" : "h-[520px]")}>
              <Palette wide={wide} />
              <Workspace wide={wide} />
              <Sidebar wide={wide} messages={messages} />
            </div>
            {children}
          </div>
          <DownloadBar />
        </div>
        <i className="w-px shrink-0 bg-[linear-gradient(to_bottom,#2c0a2a_70%,#d9735a_70%)]" />
      </div>
    </div>
  );
}

const at = (time, node, name, value) => ({ time, node, name, value });
const BEFORE = [
  at("2:37:38", "f9c1a428.56a438", "PLL", "28"),
  at("2:37:38", "62b05e8f.05db5", "PMIC", "100"),
  at("2:37:38", "35e620c2.0747a", "FAN", "28"),
  at("2:37:43", "28bb7be9.22b0d4", "A0", "34"),
  at("2:37:43", "315136f.60bc0ca", "CPU", "28.5"),
  at("2:37:43", "21b76528.24e79a", "PLL", "28"),
];
const AFTER = [
  at("2:38:23", "f9c1a428.56a438", "PLL", "28"),
  at("2:38:23", "62b05e8f.05db5", "PMIC", "100"),
  at("2:38:23", "35e620c2.0747a", "FAN", "28"),
  at("2:38:28", "28bb7be9.22b0d4", "A0", "34"),
  at("2:38:28", "315136f.60bc0ca", "CPU", "28.5"),
  at("2:38:28", "21b76528.24e79a", "PLL", "28"),
];

export default function App() {
  return (
    <div className={SANS + " grid min-h-screen grid-cols-[1085fr_237fr_1138fr] items-start bg-white pr-[37px] pl-[31px]"}>
      <div className="pt-[119px]">
        <Screen messages={BEFORE}>
          <MainMenu />
        </Screen>
      </div>
      <div className="pt-[250px] pl-[33px]">
        <Callout>7. 클릭</Callout>
      </div>
      <div>
        <h1 className="flex h-[105px] items-center gap-[14px] pt-1 text-[58px] leading-[80px] text-black">
          <svg viewBox="0 0 34 34" className="mt-[12px] size-[34px]" aria-hidden="true">
            <defs>
              <radialGradient id="ball" cx=".5" cy=".55" r=".55">
                <stop offset="0" stopColor="#e3e6ef" />
                <stop offset=".7" stopColor="#d3d7e2" />
                <stop offset="1" stopColor="#a9adb8" />
              </radialGradient>
            </defs>
            <ellipse cx="16" cy="18.500" rx="15" ry="15" fill="#000" opacity=".18" />
            <circle cx="15.500" cy="16" r="15" fill="url(#ball)" />
            <path d="M2 19c5 3 9-2 14-3s9-1 13-6" fill="none" stroke="#b5bac8" strokeWidth="1.200" />
            <path d="M2.500 20.500c5 3 9-2 14-3s9-1 13-6" fill="none" stroke="#f6f7fb" strokeWidth="1.200" />
          </svg>
          디플로이 하기
        </h1>
        <div className="relative ml-[34px]">
          <Screen wide messages={AFTER}>
            <div className="absolute inset-0 flex justify-center bg-[#a0a0a0]/50 pt-[27px]">
              <ImportDialog />
            </div>
          </Screen>
          <Callout className="absolute top-[147px] left-[60.3%]">8.클릭</Callout>
          <Callout className="absolute top-[325px] left-[37.4%]">9. flow.json을 업로드</Callout>
        </div>
      </div>
    </div>
  );
}
